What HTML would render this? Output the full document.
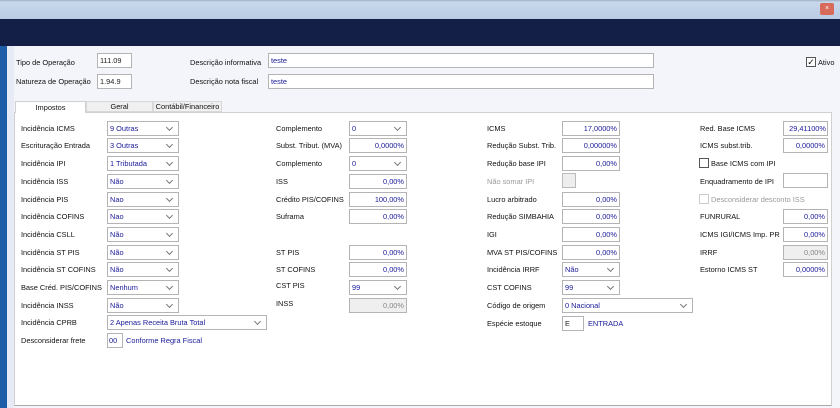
<!DOCTYPE html>
<html><head><meta charset="utf-8"><style>
*{margin:0;padding:0;box-sizing:border-box}
body{width:840px;height:408px;overflow:hidden;background:#f3f5fa;font-family:"Liberation Sans",sans-serif;font-size:7.4px;color:#111;position:relative}
.a{position:absolute}
.l{position:absolute;white-space:nowrap;line-height:15px}
.b{position:absolute;height:15px;background:#fff;border:1px solid #b4b4b4;color:#1a1a9a;line-height:13px;padding:0 2px;white-space:nowrap;overflow:hidden}
.r{text-align:right}
.c::after{content:"";position:absolute;right:6px;top:3px;width:4px;height:4px;border-right:1px solid #777;border-bottom:1px solid #777;transform:rotate(45deg)}
.g{background:#efefef;color:#888}
.d{color:#999}
.cb{position:absolute;width:10px;height:10px;border:1px solid #555;background:#fff}
</style></head><body>
<div class="a" style="left:0;top:0;width:840px;height:19px;background:linear-gradient(#9fb0c4 0,#c8d8ec 2px,#b8cce4 19px)"></div>
<div class="a" style="left:820px;top:3px;width:14px;height:12px;background:#d86a5a;border-radius:2px;color:#fff;font-size:7px;text-align:center;line-height:12px">×</div>
<div class="a" style="left:0;top:19px;width:840px;height:27px;background:#131f46"></div>
<div class="a" style="left:0;top:46px;width:7px;height:362px;background:#1e5ea8"></div>
<div class="a" style="left:7px;top:46px;width:7px;height:362px;background:#e6ebf5"></div>
<div class="a" style="left:14px;top:112px;width:818px;height:294px;background:#fff;border:1px solid #d0d0d0;border-bottom:1px solid #aaa"></div>

<div class="l" style="left:16px;top:55px">Tipo de Operação</div>
<div class="b" style="left:97px;top:53px;width:35px;color:#222">111.09</div>
<div class="l" style="left:16px;top:74px">Natureza de Operação</div>
<div class="b" style="left:97px;top:74px;width:35px;color:#222">1.94.9</div>
<div class="l" style="left:190px;top:55px">Descrição informativa</div>
<div class="b" style="left:268px;top:53px;width:386px">teste</div>
<div class="l" style="left:190px;top:74px">Descrição nota fiscal</div>
<div class="b" style="left:268px;top:74px;width:386px">teste</div>
<div class="cb" style="left:806px;top:57px;font-size:9px;line-height:8px;text-align:center">✓</div>
<div class="l" style="left:818px;top:55px">Ativo</div>

<div class="a" style="left:15px;top:101px;width:71px;height:12px;background:#fff;border:1px solid #d0d0d0;border-bottom:none;text-align:center;line-height:11px">Impostos</div>
<div class="a" style="left:86px;top:101px;width:67px;height:11px;background:#f0f0f0;border:1px solid #d8d8d8;text-align:center;line-height:10px">Geral</div>
<div class="a" style="left:153px;top:101px;width:69px;height:11px;background:#f0f0f0;border:1px solid #d8d8d8;text-align:center;line-height:10px">Contábil/Financeiro</div>

<div class="l" style="left:21px;top:121px">Incidência ICMS</div><div class="b c" style="left:107px;top:121px;width:72px">9 Outras</div>
<div class="l" style="left:21px;top:138px">Escrituração Entrada</div><div class="b c" style="left:107px;top:138px;width:72px">3 Outras</div>
<div class="l" style="left:21px;top:156px">Incidência IPI</div><div class="b c" style="left:107px;top:156px;width:72px">1 Tributada</div>
<div class="l" style="left:21px;top:174px">Incidência ISS</div><div class="b c" style="left:107px;top:174px;width:72px">Não</div>
<div class="l" style="left:21px;top:192px">Incidência PIS</div><div class="b c" style="left:107px;top:192px;width:72px">Nao</div>
<div class="l" style="left:21px;top:209px">Incidência COFINS</div><div class="b c" style="left:107px;top:209px;width:72px">Nao</div>
<div class="l" style="left:21px;top:227px">Incidência CSLL</div><div class="b c" style="left:107px;top:227px;width:72px">Não</div>
<div class="l" style="left:21px;top:245px">Incidência ST PIS</div><div class="b c" style="left:107px;top:245px;width:72px">Não</div>
<div class="l" style="left:21px;top:262px">Incidência ST COFINS</div><div class="b c" style="left:107px;top:262px;width:72px">Não</div>
<div class="l" style="left:21px;top:280px">Base Créd. PIS/COFINS</div><div class="b c" style="left:107px;top:280px;width:72px">Nenhum</div>
<div class="l" style="left:21px;top:298px">Incidência INSS</div><div class="b c" style="left:107px;top:298px;width:72px">Não</div>
<div class="l" style="left:21px;top:315px">Incidência CPRB</div><div class="b c" style="left:107px;top:315px;width:160px">2 Apenas Receita Bruta Total</div>
<div class="l" style="left:21px;top:333px">Desconsiderar frete</div><div class="b" style="left:107px;top:333px;width:16px;padding:0 1px">00</div>
<div class="l" style="left:126px;top:333px;color:#1a1a9a">Conforme Regra Fiscal</div>

<div class="l" style="left:276px;top:121px">Complemento</div><div class="b c" style="left:349px;top:121px;width:58px">0</div>
<div class="l" style="left:276px;top:138px">Subst. Tribut. (MVA)</div><div class="b r" style="left:349px;top:138px;width:58px">0,0000%</div>
<div class="l" style="left:276px;top:156px">Complemento</div><div class="b c" style="left:349px;top:156px;width:58px">0</div>
<div class="l" style="left:276px;top:174px">ISS</div><div class="b r" style="left:349px;top:174px;width:58px">0,00%</div>
<div class="l" style="left:276px;top:192px">Crédito PIS/COFINS</div><div class="b r" style="left:349px;top:192px;width:58px">100,00%</div>
<div class="l" style="left:276px;top:209px">Suframa</div><div class="b r" style="left:349px;top:209px;width:58px">0,00%</div>
<div class="l" style="left:276px;top:245px">ST PIS</div><div class="b r" style="left:349px;top:245px;width:58px">0,00%</div>
<div class="l" style="left:276px;top:262px">ST COFINS</div><div class="b r" style="left:349px;top:262px;width:58px">0,00%</div>
<div class="l" style="left:276px;top:278px">CST PIS</div><div class="b c" style="left:349px;top:280px;width:58px">99</div>
<div class="l" style="left:276px;top:296px">INSS</div><div class="b r g" style="left:349px;top:298px;width:58px">0,00%</div>

<div class="l" style="left:487px;top:121px">ICMS</div><div class="b r" style="left:562px;top:121px;width:58px">17,0000%</div>
<div class="l" style="left:487px;top:138px">Redução Subst. Trib.</div><div class="b r" style="left:562px;top:138px;width:58px">0,00000%</div>
<div class="l" style="left:487px;top:156px">Redução base IPI</div><div class="b r" style="left:562px;top:156px;width:58px">0,00%</div>
<div class="l d" style="left:487px;top:174px">Não somar IPI</div><div class="a" style="left:562px;top:173px;width:14px;height:15px;background:#eee;border:1px solid #bbb"></div>
<div class="l" style="left:487px;top:192px">Lucro arbitrado</div><div class="b r" style="left:562px;top:192px;width:58px">0,00%</div>
<div class="l" style="left:487px;top:209px">Redução SIMBAHIA</div><div class="b r" style="left:562px;top:209px;width:58px">0,00%</div>
<div class="l" style="left:487px;top:227px">IGI</div><div class="b r" style="left:562px;top:227px;width:58px">0,00%</div>
<div class="l" style="left:487px;top:245px">MVA ST PIS/COFINS</div><div class="b r" style="left:562px;top:245px;width:58px">0,00%</div>
<div class="l" style="left:487px;top:262px">Incidência IRRF</div><div class="b c" style="left:562px;top:262px;width:58px">Não</div>
<div class="l" style="left:487px;top:280px">CST COFINS</div><div class="b c" style="left:562px;top:280px;width:58px">99</div>
<div class="l" style="left:487px;top:298px">Código de origem</div><div class="b c" style="left:562px;top:298px;width:131px">0 Nacional</div>
<div class="l" style="left:487px;top:316px">Espécie estoque</div><div class="b" style="left:562px;top:316px;width:22px;color:#222">E</div>
<div class="l" style="left:588px;top:316px;color:#1a1a9a">ENTRADA</div>

<div class="l" style="left:700px;top:121px">Red. Base ICMS</div><div class="b r" style="left:783px;top:121px;width:45px;padding:0 1px">29,41100%</div>
<div class="l" style="left:700px;top:138px">ICMS subst.trib.</div><div class="b r" style="left:783px;top:138px;width:45px">0,0000%</div>
<div class="cb" style="left:699px;top:158px"></div><div class="l" style="left:711px;top:156px">Base ICMS com IPI</div>
<div class="l" style="left:700px;top:174px">Enquadramento de IPI</div><div class="b" style="left:783px;top:173px;width:45px"></div>
<div class="cb" style="left:699px;top:194px;border-color:#ccc"></div><div class="l d" style="left:711px;top:192px">Desconsiderar desconto ISS</div>
<div class="l" style="left:700px;top:209px">FUNRURAL</div><div class="b r" style="left:783px;top:209px;width:45px">0,00%</div>
<div class="l" style="left:700px;top:227px">ICMS IGI/ICMS Imp. PR</div><div class="b r" style="left:783px;top:227px;width:45px">0,00%</div>
<div class="l" style="left:700px;top:245px">IRRF</div><div class="b r g" style="left:783px;top:245px;width:45px">0,00%</div>
<div class="l" style="left:700px;top:262px">Estorno ICMS ST</div><div class="b r" style="left:783px;top:262px;width:45px">0,0000%</div>
</body></html>
